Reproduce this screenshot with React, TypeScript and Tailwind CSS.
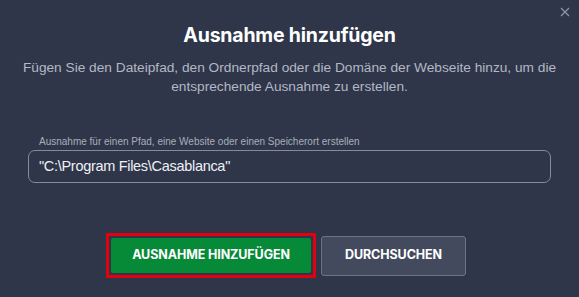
import React from 'react';

const App: React.FC = () => {
  return (
    <div
      className="relative w-[579px] h-[297px] bg-[#2f364a] overflow-hidden"
      style={{ fontFamily: 'Inter, "Liberation Sans", sans-serif' }}
    >
      {/* close */}
      <button className="absolute right-[8px] top-[6px] w-[12px] h-[12px] flex items-center justify-center">
        <svg width="10" height="10" viewBox="0 0 10 10">
          <path d="M1 1L9 9M9 1L1 9" stroke="#8b91a0" strokeWidth="1.4" />
        </svg>
      </button>

      <div className="flex flex-col items-center pt-[23px]">
        <h1 className="text-[19.5px] leading-[24px] font-bold text-white tracking-[-0.2px]">
          Ausnahme hinzufügen
        </h1>
        <p
          className="mt-[12px] whitespace-nowrap text-center text-[13.7px] leading-[18.5px] text-[#b3b8c4]"
          style={{ fontFamily: '"Liberation Sans", Arial, sans-serif' }}
        >
          Fügen Sie den Dateipfad, den Ordnerpfad oder die Domäne der Webseite hinzu, um die
          <br />
          entsprechende Ausnahme zu erstellen.
        </p>
      </div>

      <div className="mt-[39px] px-[28px]">
        <label
          className="block pl-[11px] text-[10px] leading-[13px] text-[#a9aebb]"
          style={{ fontFamily: '"Liberation Sans", Arial, sans-serif' }}
        >
          Ausnahme für einen Pfad, eine Website oder einen Speicherort erstellen
        </label>
        <div className="mt-[2px] h-[33px] rounded-[7px] border-[1.5px] border-[#858b99] flex items-center pl-[10px]">
          <span
            className="text-[14.5px] tracking-[-0.3px] text-[#eef0f4]"
            style={{ fontFamily: '"Liberation Sans", Arial, sans-serif' }}
          >
            "C:\Program Files\Casablanca"
          </span>
        </div>
      </div>

      <div className="mt-[50px] flex justify-center items-center gap-[5px] pr-[7px]">
        <div className="border-[3px] border-[#e3000f] p-[2px]">
          <button className="w-[200px] h-[35px] rounded-[2px] bg-[#078a38] text-white text-[12.5px] font-bold tracking-[-0.1px]">
            AUSNAHME HINZUFÜGEN
          </button>
        </div>
        <button className="w-[145px] h-[40px] rounded-[3px] bg-[#434a5e] border border-[#6e7486] text-white text-[12.5px] font-bold tracking-[-0.1px]">
          DURCHSUCHEN
        </button>
      </div>
    </div>
  );
};

export default App;
